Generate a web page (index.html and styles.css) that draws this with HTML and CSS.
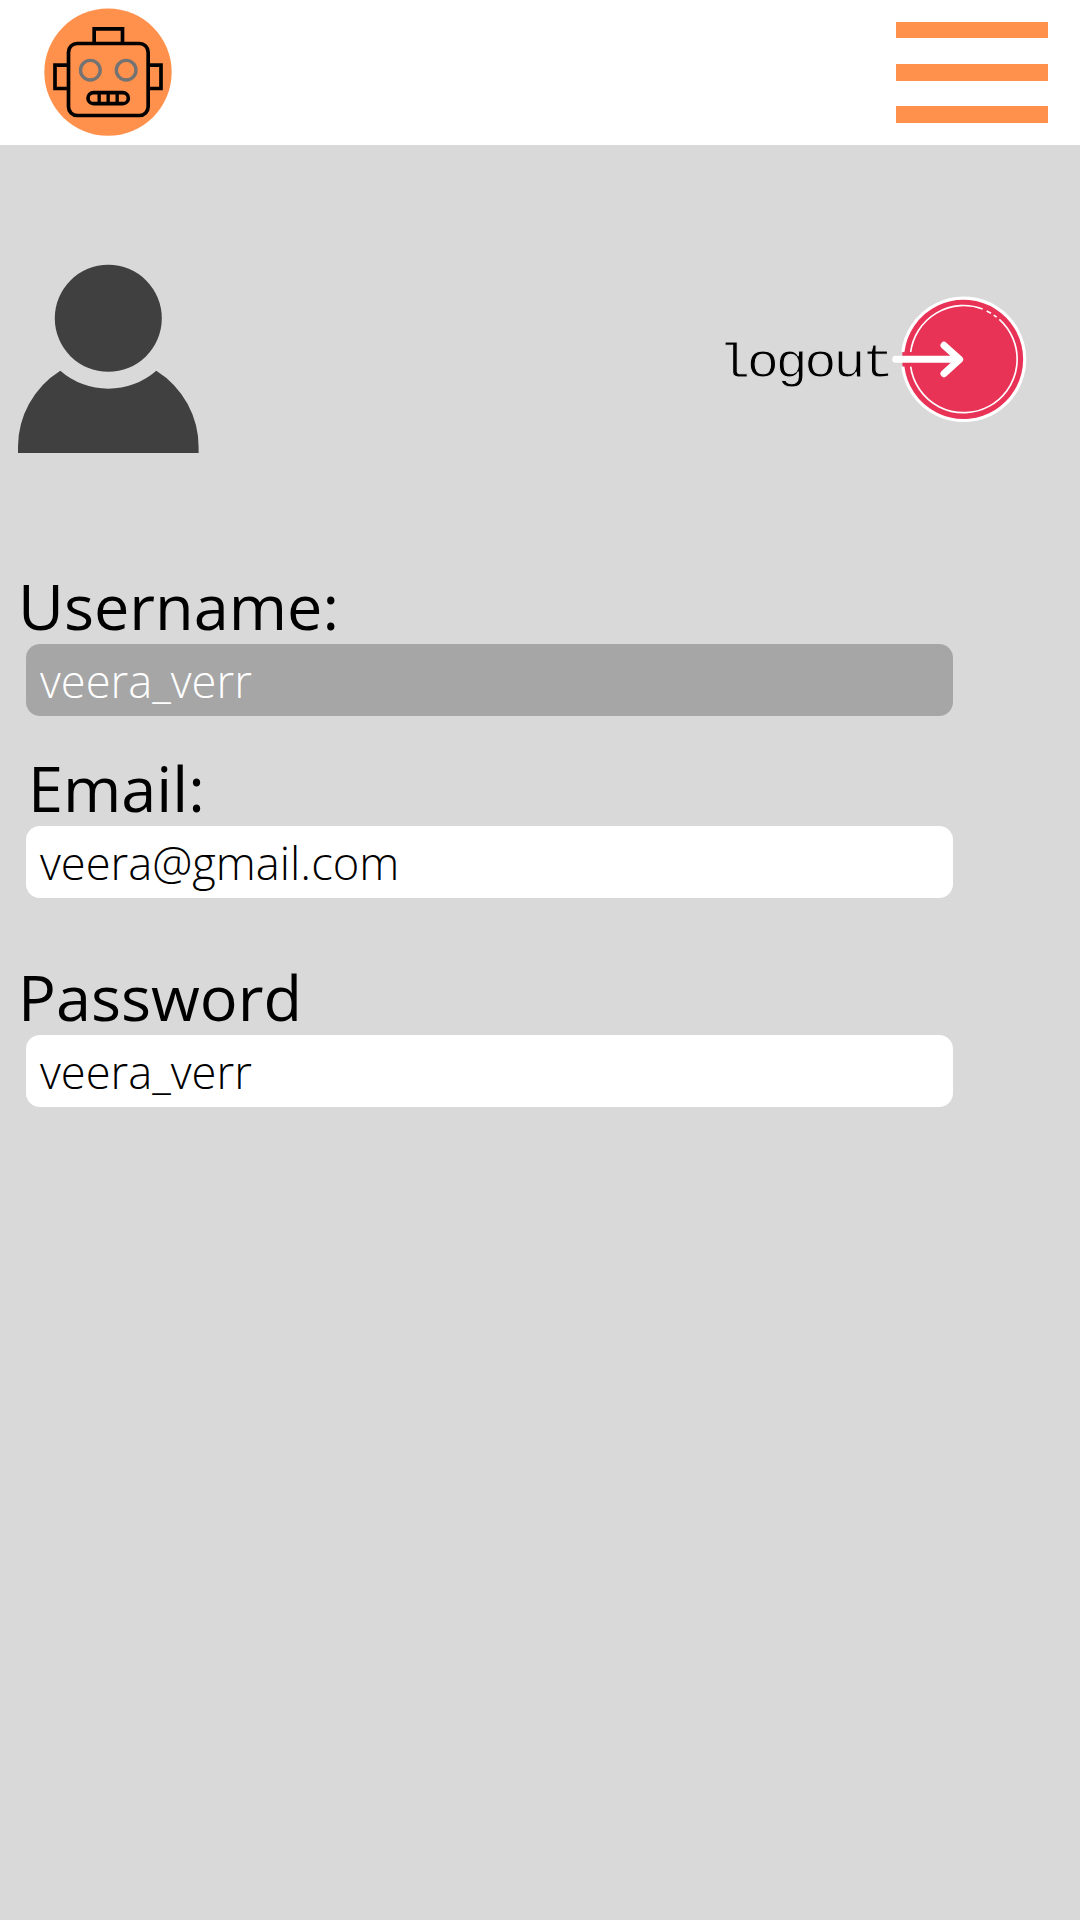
FILE: index.html
```html
<!DOCTYPE html>
<html lang="en">
<head>
<meta charset="utf-8">
<title>Profile</title>
<link rel="stylesheet" href="styles.css">
</head>
<body>
<header class="topbar">
  <svg class="logo" viewBox="42 24 384 384" aria-label="Robot logo">
    <circle cx="234" cy="216.500" r="191" fill="#ff914d"/>
    <g fill="none" stroke="#000" stroke-width="11">
      <rect x="115.500" y="130.500" width="239" height="216" rx="26"/>
      <path d="M192.500 130V86.500H277.500V130M115 195.500H75V265.500H115M355 195.500H393V265.500H355"/>
      <rect x="174" y="278" width="121" height="33" rx="16.500"/>
      <path d="M207.500 278V311M234.500 278V311M261.500 278V311" stroke-width="10"/>
    </g>
    <g fill="none" stroke="#737373" stroke-width="10">
      <circle cx="181" cy="210.500" r="29.500"/>
      <circle cx="288.500" cy="210.500" r="29.500"/>
    </g>
  </svg>
  <div class="menu" role="button" aria-label="Menu"><span></span><span></span><span></span></div>
</header>
<main class="profile">
  <section class="account">
    <svg class="avatar" viewBox="18 264 181 189" aria-label="User">
      <g fill="#404040">
        <circle cx="108.300" cy="318.300" r="53.500"/>
        <path d="M18 453V448A90.300 90.300 0 0 1 60.300 370.700A73 73 0 0 0 156.300 370.700A90.300 90.300 0 0 1 198.600 448V453Z"/>
      </g>
    </svg>
    <div class="logout">
      <span class="logout-text">logout</span>
      <svg class="logout-icon" viewBox="36 45 405 384" aria-hidden="true">
        <circle cx="250.500" cy="237" r="184" fill="#e83356"/>
        <g fill="none" stroke="#fff">
          <path d="M68.500 216A183.500 183.500 0 1 1 68.500 260" stroke-width="9.500"/>
          <g stroke-width="5">
            <path d="M92 216A160.500 160.500 0 0 1 308 87M358 118A160.500 160.500 0 1 1 92 260M320 93L333 100M341 105.500L350 111.500"/>
          </g>
          <path d="M47 238H238M192 196L239 238L192 281" stroke-width="21" stroke-linecap="round" stroke-linejoin="round"/>
        </g>
      </svg>
    </div>
  </section>
  <form class="fields">
    <div class="field field-username">
      <label class="label">Username:</label>
      <div class="value value-locked">veera_verr</div>
    </div>
    <div class="field field-email">
      <label class="label">Email:</label>
      <div class="value">veera@gmail.com</div>
    </div>
    <div class="field field-password">
      <label class="label">Password</label>
      <div class="value">veera_verr</div>
    </div>
  </form>
</main>
</body>
</html>
```
FILE: styles.css
```css
* { box-sizing: border-box; }
body {
  margin: 0;
  min-height: 1920px;
  background: #d9d9d9;
  color: #000;
  font-family: "Open Sans", sans-serif;
}
.topbar {
  display: flex;
  justify-content: space-between;
  align-items: flex-start;
  height: 145px;
  padding: 8px 32px 0 44px;
  background: #fff;
}
.logo { width: 128px; height: 128px; }
.menu {
  display: flex;
  flex-direction: column;
  gap: 25.600px;
  width: 152px;
  padding-top: 13.500px;
}
.menu span { height: 16.800px; background: #ff914d; }
.profile { padding-top: 119px; }
.account {
  display: flex;
  justify-content: space-between;
  align-items: center;
  height: 189px;
  padding: 0 53px 0 18px;
}
.avatar { width: 181px; height: 189px; }
.logout { display: flex; align-items: center; }
.logout-text {
  width: 174px;
  padding-top: 10px;
  font: 48px/56px "Liberation Mono", monospace;
  letter-spacing: -3.100px;
  -webkit-text-stroke: 1px #d9d9d9;
  transform: scaleX(1.120);
  transform-origin: left;
}
.logout-icon { width: 135px; height: 128px; }
.fields { padding-top: 120.500px; }
.label {
  display: block;
  height: 70.500px;
  padding-left: 18px;
  font-size: 63px;
  line-height: 65px;
}
.value {
  width: 927px;
  height: 72px;
  margin-left: 26px;
  padding-left: 14px;
  border-radius: 14px;
  background: #fff;
  font-size: 45.300px;
  font-weight: 300;
  line-height: 73.500px;
}
.value-locked { background: #a6a6a6; color: #fff; }
.field-username .label { line-height: 63px; }
.field-email { padding-top: 39.400px; }
.field-email .label { padding-left: 28px; line-height: 66px; }
.field-password { padding-top: 66.500px; }
```
